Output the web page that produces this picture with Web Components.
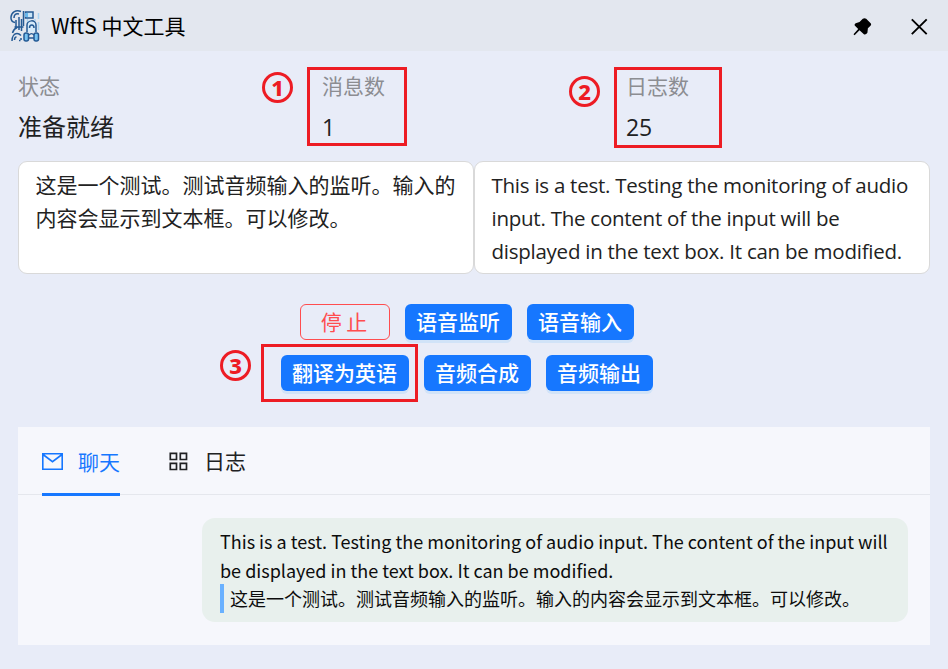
<!DOCTYPE html>
<html lang="zh-CN">
<head>
<meta charset="utf-8">
<title>WftS 中文工具</title>
<style>
html,body{margin:0;height:100%;overflow:hidden;background:#e8ecf8}
body{font-family:"Noto Sans CJK SC",sans-serif;font-size:21px;color:#222}
</style>
</head>
<body>
<wfts-app></wfts-app>
<script>
function define(name, html) {
  const t = document.createElement('template');
  t.innerHTML = html;
  customElements.define(name, class extends HTMLElement {
    constructor() {
      super();
      this.attachShadow({mode: 'open'}).append(t.content.cloneNode(true));
    }
  });
}

define('title-bar', `<style>
:host{display:flex;align-items:center;height:51px;box-sizing:border-box;padding:0 19px 0 9px;background:#e3e7ef;color:#000}
.logo{width:32px;height:34px;margin-right:10px}
.t{flex:1;line-height:30px;white-space:nowrap;padding-bottom:2px}
.pin{width:22px;height:22px;margin-right:36px}
.x{width:20px;height:20px}
</style>
<svg class="logo" viewBox="0 0 32 34" fill="none" stroke="#245a94" stroke-width="1.5">
<path d="M12 2.5C7 .5 2.500 3 2 8c-.3 3 1 5 4 5.500M10 5C6.500 4 5 6 5 9"/>
<path d="M14.500 2v15M7 11v9M10 8v13M5.500 18h9M12.500 10v12M3.500 24c1-4 3-5 5-6M3 32c0-5 2.500-7.500 5-7.500 2 0 3 1 4 2M5.500 31c0-2 1-3 2-3M10 31.500h1.500"/>
<path d="M16.500 3h7.500v6h-7.500z" fill="#c9e5f8"/><path d="M16 4h3v4h-3z" fill="#69b8ec" stroke="none"/>
<path d="M18 23v-7c0-5 9-6 9 0v7M20.500 19c0-4 4.500-4 4.500 0" fill="#d5eafa"/>
<rect x="15" y="24" width="4.500" height="8" rx="2" fill="#77c3f2"/><rect x="25" y="24" width="4.500" height="8" rx="2" fill="#77c3f2"/>
<path d="M20 26c2-2 3-2 5 0M20 29h5M12 29v2"/>
<path d="M29.500 4v6M29.500 13v8M26 10v2M18.500 10v3" stroke="#a9d4f3"/>
</svg>
<span class="t"><slot></slot></span>
<svg class="pin" viewBox="0 0 22 22"><path d="M11.800 3.800Q13.500 2.600 15.200 3.800L19.900 8.600Q20.600 9.900 19.500 10.700L16.900 13.200 16.400 17.800Q14.900 20.100 12.900 19.300L8.500 15.300 3.600 20.300 2.500 19.300 7.200 14.100 3.700 10.600Q3.100 9.100 4.700 8.200L8.500 7.100Z" fill="#000"/></svg>
<svg class="x" viewBox="0 0 20 20"><path d="M2.8 3.3 17.7 18.2M17.7 3.3 2.8 18.2" stroke="#000" stroke-width="1.9"/></svg>`);

define('stat-item', `<style>
:host{display:block;color:#202123}
.l{color:#8c8d92;line-height:33px;height:33px}
.v{font-size:24px;line-height:36px;margin-top:6px;height:36px}
</style><div class="l"><slot name="label"></slot></div><div class="v"><slot></slot></div>`);

define('text-box', `<style>
:host{display:block;box-sizing:border-box;height:113px;background:#fff;border:1px solid #d9d9d9;border-radius:9px;padding:6px 16px 0 16.5px;line-height:33px;white-space:nowrap}
</style><slot></slot>`);

define('ui-button', `<style>
:host{display:block;box-sizing:border-box;height:36px;border-radius:6px;background:#1677ff;color:#fff;padding:0 12px 0 11px;line-height:35px;font-weight:500;box-shadow:0 3px 0 rgba(5,145,255,.1);white-space:nowrap;text-align:center}
:host([danger]){background:none;border:1px solid #ff4d4f;color:#ff4d4f;width:90px;padding:0 2px 0 0;line-height:32px;font-weight:400;box-shadow:none}
</style><slot></slot>`);

define('tab-item', `<style>
:host{display:flex;align-items:center;height:68px;box-sizing:border-box;gap:15px;color:#202123;white-space:nowrap}
:host([active]){color:#1677ff;border-bottom:3px solid #1677ff;padding-top:3px;height:69px}
span{padding-bottom:2px}
slot[name=icon]{display:block}
</style><slot name="icon"></slot><span><slot></slot></span>`);

define('chat-bubble', `<style>
:host{display:block;box-sizing:border-box;width:706px;height:104px;border-radius:13px;background:#e8f0ed;padding:9px 18px;color:#0c0c0c;white-space:nowrap}
.en{font-size:18px;line-height:29px}
.zh{font-size:18px;line-height:29px;height:29px;box-sizing:border-box;border-left:4px solid #69b1ff;padding-left:6px;margin-top:-1px}
</style><div class="en"><slot></slot></div><div class="zh"><slot name="src"></slot></div>`);

/* numbered callout: red ring with a bold digit */
define('mark-num', `<style>
:host{position:absolute;box-sizing:border-box;width:31px;height:31px;border:3px solid #ed1c24;border-radius:50%;color:#ed1c24;font:800 22px/24px "Noto Sans",sans-serif;text-align:center}
</style><slot></slot>`);
define('mark-box', `<style>:host{position:absolute;box-sizing:border-box;border:3px solid #ed1c24}</style>`);

define('wfts-app', `<style>
:host{display:flex;flex-direction:column;height:669px;width:948px;position:relative}
main{padding:18px 18px 0;display:flex;flex-direction:column}
.stats{display:grid;grid-template-columns:repeat(3,1fr);height:92px}
.boxes{display:grid;grid-template-columns:1fr 1fr}
.en{font-family:"Open Sans","Noto Sans",sans-serif;font-size:20.5px;letter-spacing:-.25px;padding-top:7px}
.num{font-family:"Open Sans","Noto Sans",sans-serif;font-size:23px;letter-spacing:-.2px}
.btns{display:flex;flex-direction:column;align-items:center;gap:15px;padding:30px 0 36px;width:898px}
.btns div{display:flex;gap:15px}
.panel{background:#f6f7fc;height:218px;display:flex;flex-direction:column}
.tabs{display:flex;gap:48px;padding:0 24px;height:67px;border-bottom:1px solid #e5e7ed}
.chat{display:flex;justify-content:flex-end;padding:23px 22px}
svg{display:block}
</style>
<title-bar>WftS 中文工具</title-bar>
<main>
<div class="stats">
<stat-item><span slot="label">状态</span>准备就绪</stat-item>
<stat-item><span slot="label">消息数</span><span class="num">1</span></stat-item>
<stat-item><span slot="label">日志数</span><span class="num">25</span></stat-item>
</div>
<div class="boxes">
<text-box>这是一个测试。测试音频输入的监听。输入的<br>内容会显示到文本框。可以修改。</text-box>
<text-box class="en">This is a test. Testing the monitoring of audio<br>input. The content of the input will be<br>displayed in the text box. It can be modified.</text-box>
</div>
<div class="btns">
<div><ui-button danger>停 止</ui-button><ui-button>语音监听</ui-button><ui-button>语音输入</ui-button></div>
<div><ui-button>翻译为英语</ui-button><ui-button>音频合成</ui-button><ui-button>音频输出</ui-button></div>
</div>
<section class="panel">
<div class="tabs">
<tab-item active><svg slot="icon" width="21" height="21" viewBox="0 0 21 21" fill="none" stroke="#1677ff" stroke-width="1.6"><path d="M.8 2.8H20.2V18.2H.8ZM1 3.5 10.5 10.7 20 3.5"/></svg>聊天</tab-item>
<tab-item><svg slot="icon" width="21" height="21" viewBox="0 0 21 21" fill="none" stroke="#202123" stroke-width="1.7"><path d="M2.3 2.3H8.5V8.500H2.300ZM12.300 2.300H18.500V8.500H12.300ZM2.300 12.300H8.500V18.500H2.300ZM12.300 12.300H18.500V18.500H12.300Z"/></svg>日志</tab-item>
</div>
<div class="chat"><chat-bubble>This is a test. Testing the monitoring of audio input. The content of the input will<br>be displayed in the text box. It can be modified.<span slot="src">这是一个测试。测试音频输入的监听。输入的内容会显示到文本框。可以修改。</span></chat-bubble></div>
</section>
</main>
<mark-num style="left:262px;top:72px">1</mark-num>
<mark-num style="left:569px;top:76px">2</mark-num>
<mark-num style="left:220px;top:350px">3</mark-num>
<mark-box style="left:307px;top:67px;width:100px;height:79px"></mark-box>
<mark-box style="left:614px;top:67px;width:108px;height:81px"></mark-box>
<mark-box style="left:261px;top:344px;width:157px;height:58px"></mark-box>`);
</script>
</body>
</html>
